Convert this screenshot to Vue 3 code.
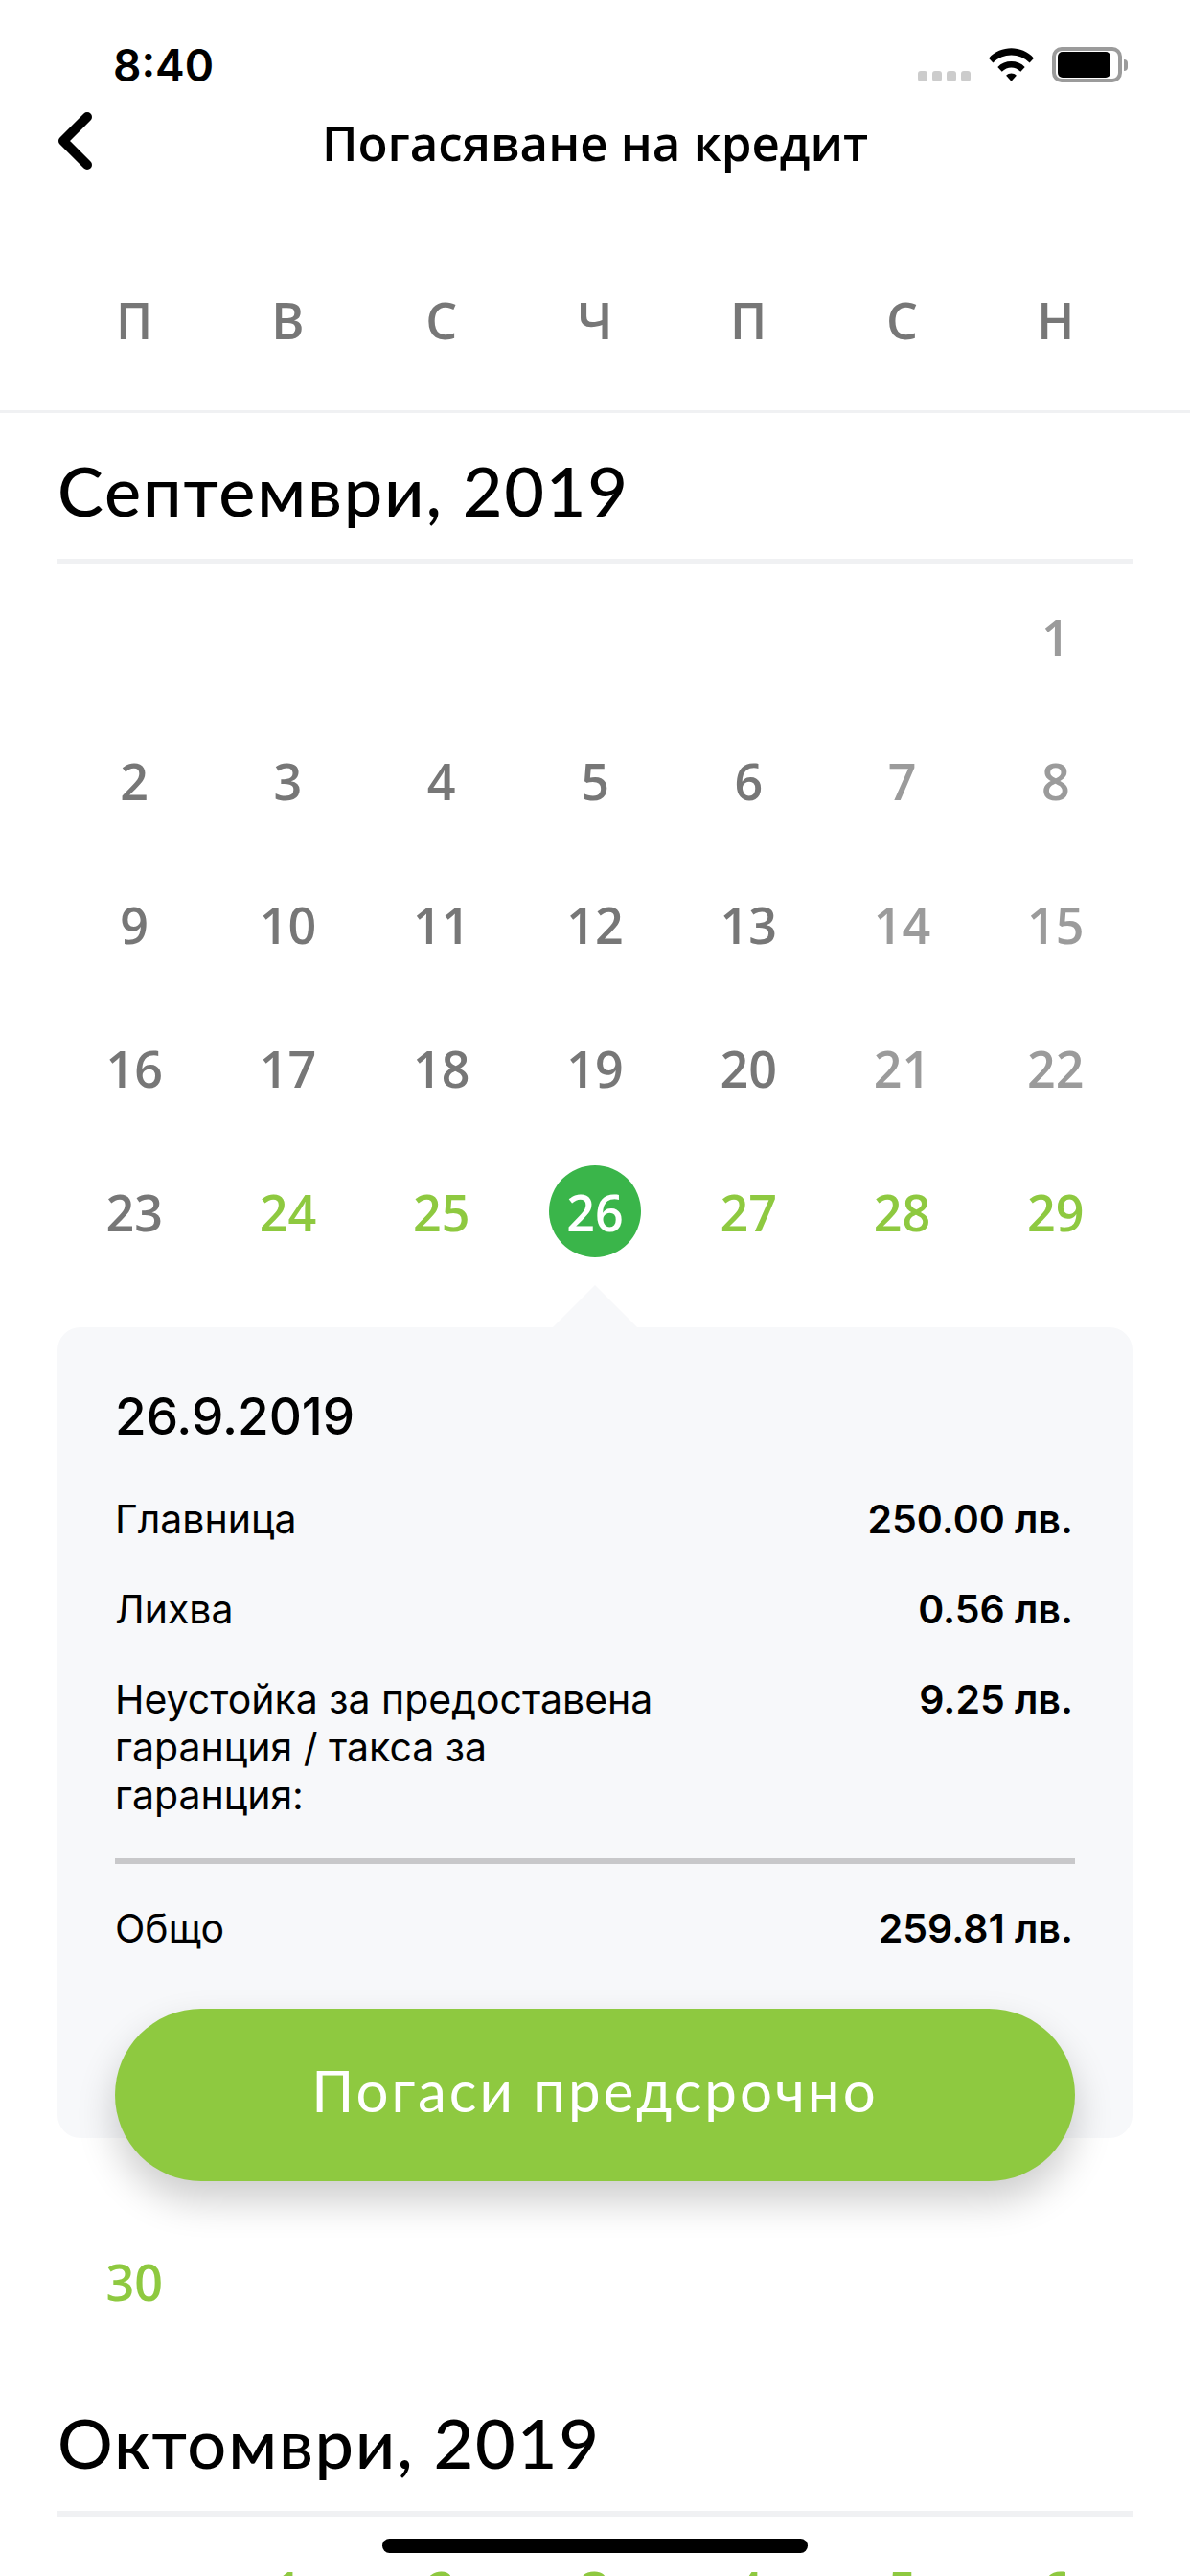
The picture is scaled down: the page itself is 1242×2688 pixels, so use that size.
<script setup>
const weekdays = ['П', 'В', 'С', 'Ч', 'П', 'С', 'Н']

// tone of each day: m = normal, l = light, g = green, s = selected
const septemberTop = [
  [null, null, null, null, null, null, { n: 1, t: 'l' }],
  [{ n: 2, t: 'm' }, { n: 3, t: 'm' }, { n: 4, t: 'm' }, { n: 5, t: 'm' }, { n: 6, t: 'm' }, { n: 7, t: 'l' }, { n: 8, t: 'l' }],
  [{ n: 9, t: 'm' }, { n: 10, t: 'm' }, { n: 11, t: 'm' }, { n: 12, t: 'm' }, { n: 13, t: 'm' }, { n: 14, t: 'l' }, { n: 15, t: 'l' }],
  [{ n: 16, t: 'm' }, { n: 17, t: 'm' }, { n: 18, t: 'm' }, { n: 19, t: 'm' }, { n: 20, t: 'm' }, { n: 21, t: 'l' }, { n: 22, t: 'l' }],
  [{ n: 23, t: 'm' }, { n: 24, t: 'g' }, { n: 25, t: 'g' }, { n: 26, t: 's' }, { n: 27, t: 'g' }, { n: 28, t: 'g' }, { n: 29, t: 'g' }]
]

const octoberTop = [null, 1, 2, 3, 4, 5, 6]

const rows = [
  { label: 'Главница', value: '250.00 лв.' },
  { label: 'Лихва', value: '0.56 лв.' },
  { label: 'Неустойка за предоставена гаранция / такса за гаранция:', value: '9.25 лв.' }
]
</script>

<template>
  <div class="screen">
    <div class="status">
      <span class="time">8:40</span>
      <div class="status-icons">
        <div class="signal"><i></i><i></i><i></i><i></i></div>
        <svg class="wifi" width="47" height="36" viewBox="0 0 48 36">
          <path d="M0 11.5 C13 -2.5 35 -2.5 48 11.5 L43.5 16.5 C33 5.5 15 5.5 4.5 16.5 Z" fill="#000" />
          <path d="M9.5 21 C17 13 31 13 38.5 21 L34 26 C28 20 20 20 14 26 Z" fill="#000" />
          <path d="M18.5 30 C21.5 27 26.5 27 29.5 30 L24 36 Z" fill="#000" />
        </svg>
        <div class="battery">
          <div class="battery-body"><div class="battery-fill"></div></div>
          <div class="battery-cap"></div>
        </div>
      </div>
    </div>

    <header class="nav">
      <svg class="back" width="36" height="60" viewBox="0 0 36 60">
        <path d="M31 5 L6 30 L31 55" fill="none" stroke="#000" stroke-width="10" stroke-linecap="round" stroke-linejoin="round" />
      </svg>
      <h1 class="nav-title">Погасяване на кредит</h1>
    </header>

    <div class="weekdays">
      <span v-for="(d, i) in weekdays" :key="i">{{ d }}</span>
    </div>

    <section class="month">
      <h2 class="month-title">Септември, 2019</h2>
      <div class="days">
        <template v-for="(row, r) in septemberTop" :key="r">
          <div class="day" v-for="(d, i) in row" :key="r + '-' + i">
            <span v-if="d && d.t === 's'" class="selected">{{ d.n }}</span>
            <span v-else-if="d" :class="'tone-' + d.t">{{ d.n }}</span>
          </div>
        </template>
      </div>

      <div class="details">
        <div class="pointer"></div>
        <div class="details-date">26.9.2019</div>
        <div class="details-row" v-for="row in rows" :key="row.label">
          <span class="details-label">{{ row.label }}</span>
          <span class="details-value">{{ row.value }}</span>
        </div>
        <div class="details-line"></div>
        <div class="details-row">
          <span class="details-label">Общо</span>
          <span class="details-value">259.81 лв.</span>
        </div>
      </div>
      <button class="pay">Погаси предсрочно</button>

      <div class="days after">
        <div class="day"><span class="tone-g">30</span></div>
      </div>
    </section>

    <section class="month">
      <h2 class="month-title">Октомври, 2019</h2>
      <div class="days">
        <div class="day" v-for="(d, i) in octoberTop" :key="i">
          <span v-if="d" class="tone-g">{{ d }}</span>
        </div>
      </div>
    </section>

    <div class="home"></div>
  </div>
</template>

<style>
html,
body {
  margin: 0;
  background: #fff;
}
</style>

<style scoped>
.screen {
  position: relative;
  width: 1242px;
  height: 2688px;
  overflow: hidden;
  background: #fff;
  font-family: "Open Sans", sans-serif;
}

.status {
  height: 100px;
  padding: 40px 65px 0 118px;
  box-sizing: border-box;
  display: flex;
  justify-content: space-between;
  align-items: flex-start;
}

.time {
  font-family: Inter, sans-serif;
  font-size: 46px;
  font-weight: 600;
  line-height: 56px;
  color: #000;
}

.status-icons {
  display: flex;
  align-items: flex-start;
  gap: 19px;
  margin-top: 9px;
}

.signal {
  display: flex;
  gap: 5px;
  margin-top: 25px;
}

.signal i {
  width: 10px;
  height: 11px;
  border-radius: 3px;
  background: #cccccc;
}

.battery {
  display: flex;
  align-items: center;
  gap: 2px;
}

.battery-body {
  width: 73px;
  height: 37px;
  box-sizing: border-box;
  border: 4px solid #9b9b9b;
  border-radius: 10px;
  padding: 1px 2px;
}

.battery-fill {
  width: 55px;
  height: 27px;
  background: #000;
  border-radius: 5px;
}

.battery-cap {
  width: 4px;
  height: 12px;
  background: #9b9b9b;
  border-radius: 0 4px 4px 0;
}

.nav {
  height: 100px;
  position: relative;
  display: flex;
  align-items: center;
  justify-content: center;
}

.back {
  position: absolute;
  left: 60px;
  top: 17px;
}

.nav-title {
  margin: 0;
  font-size: 51px;
  font-weight: 600;
  color: #000;
  line-height: 100px;
  position: relative;
  top: -2px;
}

.weekdays {
  margin-top: 100px;
  height: 128px;
  padding: 0 60px;
  display: grid;
  grid-template-columns: repeat(7, 1fr);
  border-bottom: 3px solid #f0f1f3;
  font-size: 52px;
  font-weight: 600;
  color: #777777;
  text-align: center;
  line-height: 68px;
}

.month {
  padding: 0 60px;
}

.month-title {
  margin: 0;
  height: 158px;
  box-sizing: border-box;
  border-bottom: 6px solid #f0f1f3;
  padding-top: 42px;
  font-family: Lato, "Open Sans", sans-serif;
  font-size: 72px;
  line-height: 76px;
  letter-spacing: 1.8px;
  font-weight: 500;
  color: #000;
}

.days {
  display: grid;
  grid-template-columns: repeat(7, 1fr);
  grid-auto-rows: 150px;
}

.day {
  display: flex;
  align-items: center;
  justify-content: center;
  font-size: 52px;
  font-weight: 600;
}

.tone-m {
  color: #777777;
}

.tone-l {
  color: #9b9b9b;
}

.tone-g {
  color: #8ec940;
}

.selected {
  width: 96px;
  height: 96px;
  border-radius: 50%;
  background: #3ab54a;
  color: #fff;
  display: flex;
  align-items: center;
  justify-content: center;
}

.details {
  position: relative;
  margin-top: 46px;
  height: 846px;
  box-sizing: border-box;
  padding: 60px 60px 0;
  background: #f7f8fa;
  border-radius: 24px;
  font-family: Inter, sans-serif;
  color: #000;
}

.pointer {
  position: absolute;
  left: 517px;
  top: -44px;
  width: 0;
  height: 0;
  border-left: 44px solid transparent;
  border-right: 44px solid transparent;
  border-bottom: 44px solid #f7f8fa;
}

.details-date {
  font-size: 53px;
  font-weight: 500;
  line-height: 66px;
  margin-bottom: 49px;
}

.details-row {
  display: flex;
  justify-content: space-between;
  align-items: flex-start;
  font-size: 41px;
  line-height: 50px;
  margin-bottom: 44px;
}

.details-label {
  width: 570px;
}

.details-value {
  font-weight: 600;
  margin-right: 2px;
}

.details-line {
  height: 6px;
  background: #c8c8ca;
  margin-top: -3px;
  margin-bottom: 42px;
}

.pay {
  display: block;
  position: relative;
  width: 1002px;
  height: 180px;
  margin: -135px 0 0 60px;
  padding: 0 0 10px;
  border: none;
  border-radius: 90px;
  background: #8ec940;
  color: #fff;
  font-family: Lato, "Open Sans", sans-serif;
  font-size: 60px;
  letter-spacing: 3px;
  box-shadow: 0 20px 40px rgba(0, 0, 0, 0.2);
}

.days.after {
  margin-top: 29px;
  margin-bottom: 13px;
}

.home {
  position: absolute;
  left: 399px;
  top: 2649px;
  width: 444px;
  height: 15px;
  border-radius: 8px;
  background: #000;
}
</style>
